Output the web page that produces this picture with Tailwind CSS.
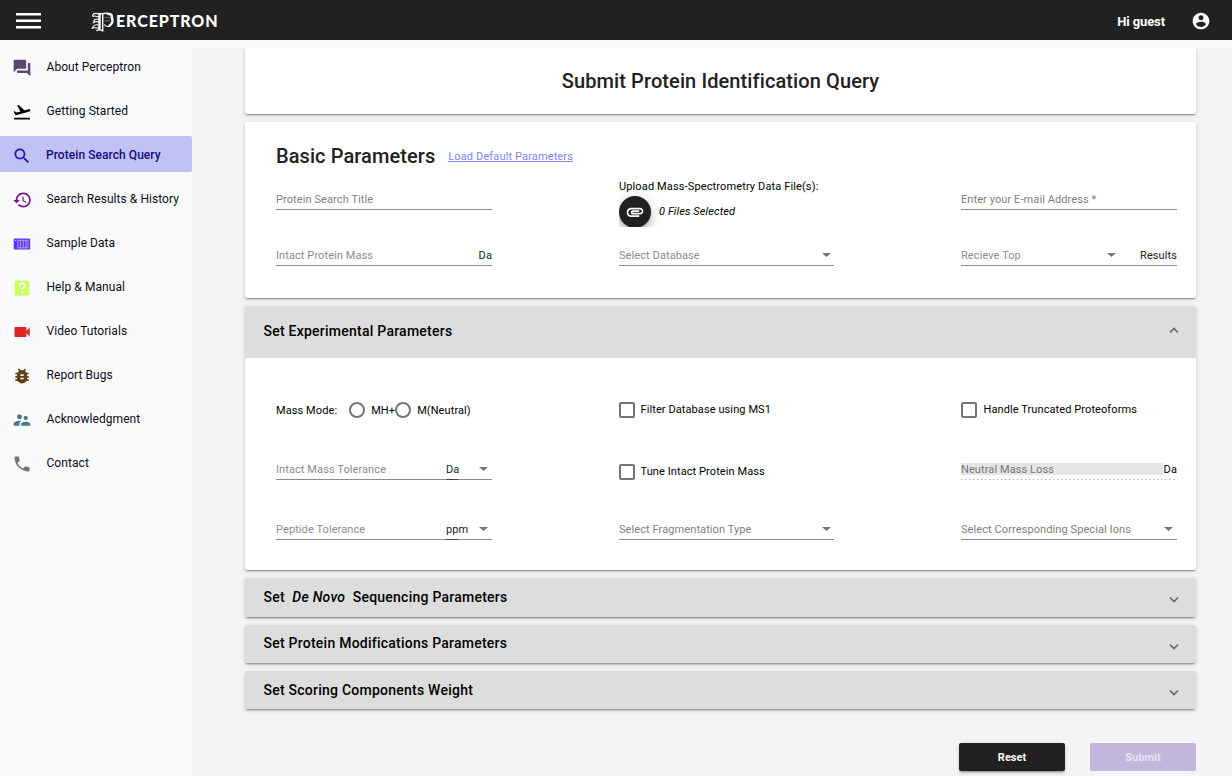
<!DOCTYPE html>
<html lang="en">
<head>
<meta charset="utf-8">
<title>Perceptron</title>
<script src="https://cdn.jsdelivr.net/npm/@tailwindcss/browser@4"></script>
</head>
<body class="h-[776px] overflow-hidden bg-[#fafafa] font-['Roboto',sans-serif] text-[#212121]">
<header class="flex h-10 items-center bg-[#212121] pr-[21px] pl-4 text-white">
  <svg class="mt-px h-4 w-[25px]" viewBox="0 0 25 16" fill="#fff"><path d="M0 0h25v2.500H0zM0 6.500h25v2.500H0zM0 13h25v2.500H0z"/></svg>
  <div class="ml-[50px] flex items-center">
    <svg class="mt-[3px] h-5 w-6" viewBox="0 0 24 20" fill="none" stroke="#f4f4f4" stroke-linecap="round">
      <path stroke-width="1.1" d="M1.500 3.500C2.500 0.800 5 1 8 2M2 4.500C4 3 5.500 5.500 8 4.500M7 7.500C4.500 6 3 8 2.500 10.500C4 9 5.500 10 7.500 9.500M7.500 13C4.500 12 2.500 13.500 0.800 16.500C3.500 14.500 5.500 17 8 15.500"/>
      <path stroke-width="2.400" d="M8.500 2.500v14"/>
      <path stroke-width="1.500" d="M11.700 2v17M6 18.500C8 17 9.500 17.500 11.700 19M8 1.500C11 2.500 13 0.800 16 1.200"/>
      <path stroke-width="0.600" stroke="#a8a8a8" d="M14 5.500C15 5 16.500 6 18.500 5.200M14 9C15 8.500 16.500 9.500 18.500 8.800"/>
      <path stroke-width="2.600" d="M17 1.800C20.500 2 21.300 3.500 20.800 6C22.300 8 21.500 11.500 18.800 13.500"/>
      <path stroke-width="1.100" d="M18.500 14.200C16.500 15 15 14.200 13.500 12.800"/>
    </svg>
    <span class="mt-[2px] ml-px font-['Lato',sans-serif] text-[16px] leading-5 font-black tracking-[0.9px]">ERCEPTRON</span>
  </div>
  <span class="mt-[3px] ml-auto text-[13px] leading-5 font-bold tracking-[-0.1px]">Hi guest</span>
  <svg class="mt-px ml-[26px] h-5 w-5" viewBox="0 0 24 24" fill="#fff"><path d="M12 2C6.480 2 2 6.480 2 12s4.480 10 10 10 10-4.480 10-10S17.520 2 12 2zm0 3c1.660 0 3 1.340 3 3s-1.340 3-3 3-3-1.340-3-3 1.340-3 3-3zm0 14.200c-2.500 0-4.710-1.280-6-3.220.03-1.990 4-3.080 6-3.080 1.990 0 5.970 1.090 6 3.080-1.290 1.940-3.500 3.220-6 3.220z"/></svg>
</header>
<div class="flex h-[736px] pt-2">
  <nav class="flex w-48 shrink-0 flex-col gap-2 text-[12px] leading-4 tracking-[0.06px] text-[#0c0c1c]">
    <a class="flex h-9 items-center pt-0.5 pl-[11.500px]"><svg class="mt-px mr-[15px] size-5" viewBox="0 0 24 24" fill="#5c4770"><path d="M21 6h-2v9H6v2c0 .55.45 1 1 1h11l4 4V7c0-.55-.45-1-1-1zm-4 6V3c0-.55-.45-1-1-1H3c-.55 0-1 .45-1 1v14l4-4h10c.55 0 1-.45 1-1z"/></svg>About Perceptron</a>
    <a class="flex h-9 items-center pt-0.5 pl-[11.500px]"><svg class="mt-px mr-[15px] size-5" viewBox="0 0 24 24" fill="#000"><path d="M2.500 19h19v2h-19zm19.570-9.360c-.21-.8-1.040-1.280-1.840-1.060L14.920 10l-6.900-6.430-1.930.51 4.140 7.170-4.970 1.330-1.970-1.540-1.450.39 1.820 3.160.77 1.330 1.600-.43 5.310-1.420 4.350-1.160L21 11.490c.81-.23 1.280-1.050 1.070-1.850z"/></svg>Getting Started</a>
    <a class="flex h-9 items-center rounded-r-[2px] bg-[#bec3f3] pt-0.5 pl-[11.500px] font-medium text-[#1a0a80]"><svg class="mt-px mr-[14.500px] size-5" viewBox="0 0 24 24" fill="#2a0bc0"><path d="M15.500 14h-.79l-.28-.27C15.410 12.590 16 11.110 16 9.500 16 5.910 13.090 3 9.500 3S3 5.910 3 9.500 5.910 16 9.500 16c1.610 0 3.090-.59 4.230-1.570l.27.28v.79l5 4.990L20.490 19l-4.990-5zm-6 0C7.010 14 5 11.990 5 9.500S7.010 5 9.500 5 14 7.010 14 9.500 11.990 14 9.500 14z"/></svg>Protein Search Query</a>
    <a class="flex h-9 items-center pt-0.5 pl-[11.500px]"><svg class="mt-px mr-[15px] size-5" viewBox="0 0 24 24" fill="#75138a"><path d="M13.500 3c-4.970 0-9 4.030-9 9H1.500l3.890 3.890.07.14L9.500 12H6.500c0-3.870 3.130-7 7-7s7 3.130 7 7-3.130 7-7 7c-1.930 0-3.680-.79-4.940-2.060l-1.420 1.420C8.770 19.990 11.010 21 13.500 21c4.970 0 9-4.030 9-9s-4.030-9-9-9zm-1 5v5l4.280 2.540.72-1.210-3.500-2.080V8H12.500z"/></svg>Search Results &amp; History</a>
    <a class="flex h-9 items-center pt-0.5 pl-[11.500px]"><svg class="mt-px mr-[15px] size-5" viewBox="0 0 20 20"><rect x="1.700" y="4.500" width="16.500" height="11" rx="1.300" fill="#5a35f5"/><path d="M3.200 6.500h1" stroke="#fff"/><path d="M5.800 6.600v7.200M8.500 6.600v7.200M11.200 6.600v7.200M13.900 6.600v7.200M16 6.600v7.200M5.800 6.300H16M5.800 13.900H16" stroke="#c8bcff" stroke-width=".8"/></svg>Sample Data</a>
    <a class="flex h-9 items-center pt-0.5 pl-[11.500px]"><svg class="mt-px mr-[15px] size-5" viewBox="0 0 20 20" fill="none"><rect x="2.600" y="2.500" width="15" height="15" rx="1.500" fill="#ccff66"/><path d="M7.700 7.800C7.700 4.500 12.700 4.500 12.700 7.600C12.700 9.600 10.200 9.600 10.200 11.800M10.200 13.300v1.500" stroke="#fff" stroke-width="1.500"/></svg>Help &amp; Manual</a>
    <a class="flex h-9 items-center pt-0.5 pl-[11.500px]"><svg class="mt-px mr-[15px] size-5" viewBox="0 0 24 24" fill="#dc2626"><path d="M17.300 10.500V7c0-.55-.45-1-1-1H4c-.55 0-1 .45-1 1v10c0 .55.45 1 1 1h12.300c.55 0 1-.45 1-1v-3.500l4 4v-11l-4 4z"/></svg>Video Tutorials</a>
    <a class="flex h-9 items-center pt-0.5 pl-[11.500px]"><svg class="mt-px mr-[15px] size-5" viewBox="0 0 24 24" fill="#5e4216"><path d="M20 8h-2.810c-.45-.78-1.070-1.450-1.820-1.960L17 4.410 15.590 3l-2.170 2.170C12.960 5.060 12.490 5 12 5c-.49 0-.96.06-1.410.17L8.410 3 7 4.410l1.620 1.630C7.880 6.550 7.260 7.220 6.810 8H4v2h2.090c-.05.33-.09.66-.09 1v1H4v2h2v1c0 .34.04.67.09 1H4v2h2.810c1.040 1.790 2.970 3 5.190 3s4.150-1.210 5.190-3H20v-2h-2.090c.05-.33.09-.66.09-1v-1h2v-2h-2v-1c0-.34-.04-.67-.09-1H20V8zm-6 8h-4v-2h4v2zm0-4h-4v-2h4v2z"/></svg>Report Bugs</a>
    <a class="flex h-9 items-center pt-0.5 pl-[11.500px]"><svg class="mt-px mr-[15px] size-5" viewBox="0 0 24 24" fill="#4a7a8a"><path d="M16.500 12c1.380 0 2.490-1.120 2.490-2.500S17.880 7 16.500 7C15.120 7 14 8.120 14 9.500s1.120 2.500 2.500 2.500zM9 11c1.660 0 2.990-1.340 2.990-3S10.660 5 9 5C7.340 5 6 6.340 6 8s1.340 3 3 3zm7.500 3c-1.830 0-5.500.92-5.500 2.750V19h11v-2.250c0-1.830-3.670-2.750-5.500-2.750zM9 13c-2.330 0-7 1.170-7 3.500V19h7v-2.250c0-.85.33-2.340 2.370-3.470C10.500 13.100 9.660 13 9 13z"/></svg>Acknowledgment</a>
    <a class="flex h-9 items-center pt-0.5 pl-[11.500px]"><svg class="mt-px mr-[15px] size-5" viewBox="0 0 24 24" fill="#757575"><path d="M6.620 10.790c1.440 2.830 3.760 5.140 6.590 6.590l2.200-2.200c.27-.27.67-.36 1.020-.24 1.120.37 2.330.57 3.570.57.55 0 1 .45 1 1V20c0 .55-.45 1-1 1-9.390 0-17-7.610-17-17 0-.55.45-1 1-1h3.500c.55 0 1 .45 1 1 0 1.250.2 2.450.57 3.570.11.35.03.74-.25 1.020l-2.200 2.200z"/></svg>Contact</a>
  </nav>
  <main class="flex grow flex-col gap-2 overflow-hidden bg-[#f4f4f4] pr-9 pl-[53px] text-[11px] leading-[18px] tracking-[0.09px]">
    <section class="h-[66px] shrink-0 rounded-b-[2px] bg-white pt-[21px] text-center text-[20px] leading-6 font-medium tracking-[0.1px] shadow-[0_3px_1px_-2px_rgba(0,0,0,.2),0_2px_2px_0_rgba(0,0,0,.14),0_1px_5px_0_rgba(0,0,0,.12)]">Submit Protein Identification Query</section>

    <section class="h-44 shrink-0 rounded-[2px] bg-white pt-[22px] pl-[31px] shadow-[0_3px_1px_-2px_rgba(0,0,0,.2),0_2px_2px_0_rgba(0,0,0,.14),0_1px_5px_0_rgba(0,0,0,.12)]">
      <div class="flex h-6 items-center">
        <h2 class="text-[20px] leading-6 font-medium tracking-[0.08px]">Basic Parameters</h2>
        <a class="mt-0.5 ml-[13px] tracking-[0.13px] text-[#7b86ee] underline">Load Default Parameters</a>
      </div>
      <div class="mt-[10px] grid grid-cols-[216px_215px_216px] gap-x-[127px]">
        <div class="h-8 border-b border-[#8c8c8c] pt-[13px] text-[#808080]">Protein Search Title</div>
        <div class="h-[49px] overflow-hidden text-black">
          <div class="h-4 tracking-[0.13px]">Upload Mass-Spectrometry Data File(s):</div>
          <div class="flex items-start pt-[2px]">
            <div class="flex size-8 items-center justify-center rounded-full bg-[#212121] shadow-[0_3px_5px_-1px_rgba(0,0,0,.2),0_6px_10px_0_rgba(0,0,0,.14),0_1px_18px_0_rgba(0,0,0,.12)]"><svg class="size-5" viewBox="0 0 24 24" fill="#fff"><path d="M2 12.500C2 9.460 4.460 7 7.500 7H18c2.210 0 4 1.790 4 4s-1.790 4-4 4H9.500C8.120 15 7 13.880 7 12.500S8.120 10 9.500 10H17v2H9.410c-.55 0-.55 1 0 1H18c1.100 0 2-.9 2-2s-.9-2-2-2H7.500C5.570 9 4 10.570 4 12.500S5.570 16 7.500 16H17v2H7.500C4.460 18 2 15.540 2 12.500z"/></svg></div>
            <i class="mt-[7px] ml-2">0 Files Selected</i>
          </div>
        </div>
        <div class="h-8 border-b border-[#8c8c8c] pt-[13px] text-[#808080]">Enter your E-mail Address *</div>
        <div class="mt-5 flex h-[19px] justify-between border-b border-[#8c8c8c] text-[#8c8c8c]">Intact Protein Mass<span class="text-[#212121]">Da</span></div>
        <div class="mt-5 flex h-[19px] justify-between border-b border-[#8c8c8c] pr-[3px] text-[#8c8c8c]">Select Database<svg class="mt-[6px] h-1 w-[9px]" viewBox="0 0 9 4" fill="#757575"><path d="M0 0h9L4.500 4z"/></svg></div>
        <div class="mt-5 flex h-[19px] border-b border-[#8c8c8c] text-[#8c8c8c]">Recieve Top<svg class="mt-[6px] mr-6 ml-auto h-1 w-[9px]" viewBox="0 0 9 4" fill="#757575"><path d="M0 0h9L4.500 4z"/></svg><span class="text-[#212121]">Results</span></div>
      </div>
    </section>

    <section class="h-[264px] shrink-0 rounded-[2px] bg-white shadow-[0_3px_1px_-2px_rgba(0,0,0,.2),0_2px_2px_0_rgba(0,0,0,.14),0_1px_5px_0_rgba(0,0,0,.12)]">
      <div class="flex h-[52px] items-center justify-between rounded-t-[2px] bg-[#ddd] pr-[17px] pl-[18px]">
        <h3 class="-mt-0.5 pl-[0.500px] text-[14px] leading-5 font-medium tracking-[0.24px] text-black">Set Experimental Parameters</h3>
        <svg class="mb-1 h-[7px] w-[10px]" viewBox="0 0 10 7" fill="none" stroke="#666" stroke-width="1.700"><path d="M1 5.500L5 1.500L9 5.500"/></svg>
      </div>
      <div class="grid grid-cols-[216px_215px_216px] grid-rows-[16px_16px_16px] gap-x-[127px] pt-[44px] pl-[31px] text-black">
        <div class="flex h-4 items-center"><span class="mt-0.5">Mass Mode:</span><span class="ml-3 size-4 shrink-0 rounded-full border-2 border-[#757575]"></span><span class="mt-0.5 ml-1.5">MH+</span><span class="size-4 shrink-0 rounded-full border-2 border-[#757575]"></span><span class="mt-0.5 ml-1.5">M(Neutral)</span></div>
        <div class="flex h-4"><span class="mr-[5.500px] size-4 rounded-[2px] border-2 border-[#757575]"></span><span class="-mt-px">Filter Database using MS1</span></div>
        <div class="flex h-4"><span class="mr-[6.500px] size-4 rounded-[2px] border-2 border-[#757575]"></span><span class="-mt-px">Handle Truncated Proteoforms</span></div>

        <div class="mt-[43px] flex h-[19px] border-b border-[#8c8c8c] text-[#8c8c8c]">Intact Mass Tolerance<span class="ml-auto flex h-[19px] w-3 border-b border-[#444] text-[#212121]">Da</span><svg class="mt-[6px] mr-1 ml-[21px] h-1 w-[9px]" viewBox="0 0 9 4" fill="#757575"><path d="M0 0h9L4.500 4z"/></svg></div>
        <div class="mt-[46px] flex h-4"><span class="mr-[5.500px] size-4 rounded-[2px] border-2 border-[#757575]"></span><span class="-mt-px">Tune Intact Protein Mass</span></div>
        <div class="mt-[43px] h-[19px] w-[216px] bg-[repeating-linear-gradient(90deg,#b0b0b0_0_1px,#e4e4e4_1px_2px,transparent_2px_4px)] bg-[length:100%_1px] bg-bottom bg-no-repeat"><div class="flex h-3 w-[216px] translate-y-0.5 justify-between"><span class="h-3 w-[202px] bg-[#e5e5e5] leading-[14px] text-[#757575]">Neutral Mass Loss</span><span class="leading-[14px]">Da</span></div></div>

        <div class="mt-[87px] flex h-[19px] border-b border-[#8c8c8c] text-[#8c8c8c]">Peptide Tolerance<span class="ml-auto flex h-[19px] w-3 border-b border-[#444] text-[#212121]">ppm</span><svg class="mt-[6px] mr-1 ml-[21px] h-1 w-[9px]" viewBox="0 0 9 4" fill="#757575"><path d="M0 0h9L4.500 4z"/></svg></div>
        <div class="mt-[87px] flex h-[19px] justify-between border-b border-[#8c8c8c] pr-[3px] text-[#808080]">Select Fragmentation Type<svg class="mt-[6px] h-1 w-[9px]" viewBox="0 0 9 4" fill="#757575"><path d="M0 0h9L4.500 4z"/></svg></div>
        <div class="mt-[87px] flex h-[19px] justify-between border-b border-[#8c8c8c] pr-1 text-[#808080]">Select Corresponding Special Ions<svg class="mt-[6px] h-1 w-[9px]" viewBox="0 0 9 4" fill="#757575"><path d="M0 0h9L4.500 4z"/></svg></div>
      </div>
    </section>

    <section class="flex h-[39px] shrink-0 items-center justify-between rounded-[2px] bg-[#ddd] pr-[17px] pl-[18px] shadow-[0_3px_1px_-2px_rgba(0,0,0,.2),0_2px_2px_0_rgba(0,0,0,.14),0_1px_5px_0_rgba(0,0,0,.12)]">
      <h3 class="-mt-0.5 flex gap-[7.500px] pl-[0.500px] text-[14px] leading-5 font-medium tracking-[0.24px] text-black">Set <i>De Novo</i> Sequencing Parameters</h3>
      <svg class="mt-[3px] h-[7px] w-[10px]" viewBox="0 0 10 7" fill="none" stroke="#666" stroke-width="1.700"><path d="M1 1.500L5 5.500L9 1.500"/></svg>
    </section>
    <section class="flex h-[38px] shrink-0 items-center justify-between rounded-[2px] bg-[#ddd] pr-[17px] pl-[18px] shadow-[0_3px_1px_-2px_rgba(0,0,0,.2),0_2px_2px_0_rgba(0,0,0,.14),0_1px_5px_0_rgba(0,0,0,.12)]">
      <h3 class="-mt-[3px] pl-[0.500px] text-[14px] leading-5 font-medium tracking-[0.24px] text-black">Set Protein Modifications Parameters</h3>
      <svg class="mt-1 h-[7px] w-[10px]" viewBox="0 0 10 7" fill="none" stroke="#666" stroke-width="1.700"><path d="M1 1.500L5 5.500L9 1.500"/></svg>
    </section>
    <section class="flex h-[38px] shrink-0 items-center justify-between rounded-[2px] bg-[#ddd] pr-[17px] pl-[18px] shadow-[0_3px_1px_-2px_rgba(0,0,0,.2),0_2px_2px_0_rgba(0,0,0,.14),0_1px_5px_0_rgba(0,0,0,.12)]">
      <h3 class="pl-[0.500px] text-[14px] leading-5 font-medium tracking-[0.24px] text-black">Set Scoring Components Weight</h3>
      <svg class="mt-1 h-[7px] w-[10px]" viewBox="0 0 10 7" fill="none" stroke="#666" stroke-width="1.700"><path d="M1 1.500L5 5.500L9 1.500"/></svg>
    </section>
    <div class="mt-[26px] flex justify-end gap-[25px] text-[11px] font-bold tracking-normal">
      <button class="h-7 w-[106px] rounded-[2px] bg-[#212121] pt-0.5 text-white shadow-[0_3px_1px_-2px_rgba(0,0,0,.2),0_2px_2px_0_rgba(0,0,0,.14),0_1px_5px_0_rgba(0,0,0,.12)]">Reset</button>
      <button class="h-7 w-[106px] rounded-[2px] bg-[#c1b7dc] pt-0.5 text-[#e8e4f3]">Submit</button>
    </div>
  </main>
</div>
</body>
</html>
